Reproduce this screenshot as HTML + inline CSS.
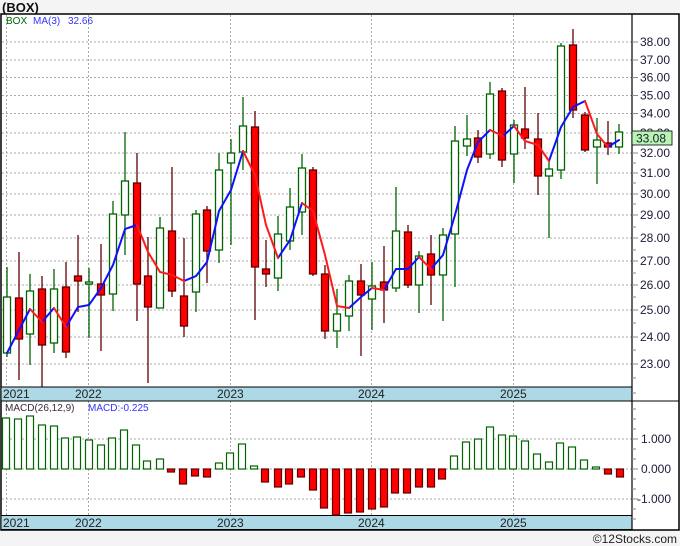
<!DOCTYPE html>
<html><head><meta charset="utf-8"><style>
html,body{margin:0;padding:0;background:#f4f4f4;width:680px;height:546px;overflow:hidden}
svg{display:block}
text{font-family:"Liberation Sans","DejaVu Sans",sans-serif}
</style></head><body>
<svg width="680" height="546" viewBox="0 0 680 546" xmlns="http://www.w3.org/2000/svg">
<rect x="0" y="0" width="680" height="546" fill="#f4f4f4"/>
<text x="2" y="12" font-size="13" font-weight="bold" fill="#111">(BOX)</text>
<rect x="1" y="14" width="678" height="516" fill="#fff" stroke="#000" stroke-width="1.5"/>
<g stroke="#aaa" stroke-width="1" stroke-dasharray="2,2">
<line x1="2" y1="42" x2="632" y2="42"/><line x1="2" y1="60" x2="632" y2="60"/><line x1="2" y1="77.5" x2="632" y2="77.5"/><line x1="2" y1="95.5" x2="632" y2="95.5"/><line x1="2" y1="113.5" x2="632" y2="113.5"/><line x1="2" y1="133" x2="632" y2="133"/><line x1="2" y1="153" x2="632" y2="153"/><line x1="2" y1="173" x2="632" y2="173"/><line x1="2" y1="194" x2="632" y2="194"/><line x1="2" y1="215" x2="632" y2="215"/><line x1="2" y1="238" x2="632" y2="238"/><line x1="2" y1="261" x2="632" y2="261"/><line x1="2" y1="285" x2="632" y2="285"/><line x1="2" y1="310" x2="632" y2="310"/><line x1="2" y1="337" x2="632" y2="337"/><line x1="2" y1="364" x2="632" y2="364"/>
<line x1="6.5" y1="15" x2="6.5" y2="387"/><line x1="88.5" y1="15" x2="88.5" y2="387"/><line x1="230.5" y1="15" x2="230.5" y2="387"/><line x1="371.5" y1="15" x2="371.5" y2="387"/><line x1="513.5" y1="15" x2="513.5" y2="387"/>
<line x1="6.5" y1="401" x2="6.5" y2="515"/><line x1="88.5" y1="401" x2="88.5" y2="515"/><line x1="230.5" y1="401" x2="230.5" y2="515"/><line x1="371.5" y1="401" x2="371.5" y2="515"/><line x1="513.5" y1="401" x2="513.5" y2="515"/>
<line x1="2" y1="439" x2="632" y2="439"/><line x1="2" y1="469" x2="632" y2="469"/><line x1="2" y1="499" x2="632" y2="499"/>
</g>
<text x="6" y="24" font-size="10" fill="#006400">BOX</text>
<text x="33" y="24" font-size="10" fill="#3333ff">MA(3)</text>
<text x="68" y="24" font-size="10" fill="#3333ff">32.66</text>
<g stroke-width="1.3">
<g stroke="#006400" fill="#fff">
<line x1="7" y1="267" x2="7" y2="357"/><rect x="3.5" y="297" width="7" height="56"/>
<line x1="30" y1="274" x2="30" y2="365"/><rect x="26.5" y="291" width="7" height="43"/>
<line x1="54" y1="269" x2="54" y2="353"/><rect x="50.5" y="289" width="7" height="54"/>
<line x1="89" y1="268" x2="89" y2="338"/><rect x="85.5" y="282" width="7" height="2"/>
<line x1="113" y1="201" x2="113" y2="311"/><rect x="109.5" y="214" width="7" height="80"/>
<line x1="125" y1="132" x2="125" y2="255"/><rect x="121.5" y="181" width="7" height="34"/>
<line x1="160" y1="217" x2="160" y2="308"/><rect x="156.5" y="228" width="7" height="80"/>
<line x1="196" y1="210" x2="196" y2="312"/><rect x="192.5" y="214" width="7" height="78"/>
<line x1="219" y1="153" x2="219" y2="263"/><rect x="215.5" y="170" width="7" height="80"/>
<line x1="231" y1="139" x2="231" y2="245"/><rect x="227.5" y="153" width="7" height="10"/>
<line x1="243" y1="97" x2="243" y2="170"/><rect x="239.5" y="126" width="7" height="26"/>
<line x1="278" y1="216" x2="278" y2="291"/><rect x="274.5" y="234" width="7" height="44"/>
<line x1="290" y1="188" x2="290" y2="250"/><rect x="286.5" y="207" width="7" height="34"/>
<line x1="302" y1="154" x2="302" y2="235"/><rect x="298.5" y="168" width="7" height="44"/>
<line x1="337" y1="289" x2="337" y2="348"/><rect x="333.5" y="314" width="7" height="17"/>
<line x1="349" y1="275" x2="349" y2="331"/><rect x="345.5" y="281" width="7" height="35"/>
<line x1="372" y1="262" x2="372" y2="330"/><rect x="368.5" y="286" width="7" height="13"/>
<line x1="396" y1="187" x2="396" y2="292"/><rect x="392.5" y="231" width="7" height="57"/>
<line x1="419" y1="251" x2="419" y2="313"/><rect x="415.5" y="256" width="7" height="29"/>
<line x1="443" y1="228" x2="443" y2="321"/><rect x="439.5" y="235" width="7" height="40"/>
<line x1="455" y1="126" x2="455" y2="287"/><rect x="451.5" y="141" width="7" height="93"/>
<line x1="467" y1="115" x2="467" y2="156"/><rect x="463.5" y="139" width="7" height="7"/>
<line x1="490" y1="82" x2="490" y2="159"/><rect x="486.5" y="94" width="7" height="60"/>
<line x1="514" y1="120" x2="514" y2="183"/><rect x="510.5" y="125" width="7" height="29"/>
<line x1="549" y1="160" x2="549" y2="238"/><rect x="545.5" y="169" width="7" height="7"/>
<line x1="561" y1="43" x2="561" y2="179"/><rect x="557.5" y="46" width="7" height="124"/>
<line x1="597" y1="118" x2="597" y2="184"/><rect x="593.5" y="140" width="7" height="7"/>
<line x1="619" y1="124" x2="619" y2="154"/><rect x="615.5" y="132" width="7" height="15"/>
</g>
<g stroke="#600000" fill="#ff0000">
<line x1="19" y1="252" x2="19" y2="380"/><rect x="15.5" y="298" width="7" height="41"/>
<line x1="42" y1="276" x2="42" y2="387"/><rect x="38.5" y="289" width="7" height="56"/>
<line x1="66" y1="262" x2="66" y2="358"/><rect x="62.5" y="287" width="7" height="65"/>
<line x1="78" y1="235" x2="78" y2="312"/><rect x="74.5" y="276" width="7" height="5"/>
<line x1="101" y1="244" x2="101" y2="351"/><rect x="97.5" y="284" width="7" height="11"/>
<line x1="137" y1="153" x2="137" y2="321"/><rect x="133.5" y="183" width="7" height="101"/>
<line x1="148" y1="237" x2="148" y2="383"/><rect x="144.5" y="276" width="7" height="31"/>
<line x1="172" y1="167" x2="172" y2="297"/><rect x="168.5" y="231" width="7" height="60"/>
<line x1="184" y1="238" x2="184" y2="337"/><rect x="180.5" y="296" width="7" height="30"/>
<line x1="207" y1="206" x2="207" y2="283"/><rect x="203.5" y="210" width="7" height="41"/>
<line x1="255" y1="111" x2="255" y2="320"/><rect x="251.5" y="127" width="7" height="140"/>
<line x1="266" y1="240" x2="266" y2="287"/><rect x="262.5" y="269" width="7" height="5"/>
<line x1="313" y1="167" x2="313" y2="276"/><rect x="309.5" y="170" width="7" height="104"/>
<line x1="325" y1="265" x2="325" y2="339"/><rect x="321.5" y="274" width="7" height="57"/>
<line x1="361" y1="264" x2="361" y2="356"/><rect x="357.5" y="281" width="7" height="14"/>
<line x1="384" y1="246" x2="384" y2="323"/><rect x="380.5" y="282" width="7" height="8"/>
<line x1="408" y1="225" x2="408" y2="288"/><rect x="404.5" y="232" width="7" height="53"/>
<line x1="431" y1="235" x2="431" y2="305"/><rect x="427.5" y="254" width="7" height="21"/>
<line x1="478" y1="130" x2="478" y2="163"/><rect x="474.5" y="138" width="7" height="19"/>
<line x1="502" y1="88" x2="502" y2="167"/><rect x="498.5" y="91" width="7" height="69"/>
<line x1="525" y1="87" x2="525" y2="149"/><rect x="521.5" y="129" width="7" height="9"/>
<line x1="538" y1="113" x2="538" y2="195"/><rect x="534.5" y="139" width="7" height="37"/>
<line x1="573" y1="29" x2="573" y2="118"/><rect x="569.5" y="45" width="7" height="65"/>
<line x1="585" y1="112" x2="585" y2="152"/><rect x="581.5" y="115" width="7" height="35"/>
<line x1="608" y1="121" x2="608" y2="155"/><rect x="604.5" y="143" width="7" height="4"/>
</g>
</g>
<g stroke-width="2" fill="none" stroke-linecap="round">
<path stroke="#1010ff" d="M7 353L19 330L30 309M42 322L54 308M66 327L78 307L89 305L101 288L113 265L125 229L137 225M184 281L196 276L207 262L219 211L231 190L243 151M278 258L290 240L302 203M349 308L361 297L372 288M384 290L396 269L408 269L419 257M431 269L443 255L455 215L467 170L478 142L490 130M503 136L514 126M549 161L561 127L573 107L585 101M608 147L619 140"/>
<path stroke="#ff1a1a" d="M30 309L42 322M54 308L66 327M137 225L148 252L160 272L172 275L184 281M243 151L255 175L266 225L278 258M302 203L313 211L325 255L337 306L349 308M372 288L384 290M419 257L431 269M490 130L503 136M514 126L525 141L538 145L549 161M585 101L597 134L608 147"/>
</g>
<rect x="1" y="387" width="631" height="14" fill="#add8e6" stroke="#000" stroke-width="1"/>
<rect x="1" y="515.5" width="631" height="14" fill="#add8e6" stroke="#000" stroke-width="1"/>
<line x1="632" y1="401" x2="679" y2="401" stroke="#000"/>
<g font-size="12" fill="#222">
<text x="3" y="398">2021</text><text x="75" y="398">2022</text><text x="217" y="398">2023</text><text x="358" y="398">2024</text><text x="500" y="398">2025</text>
<text x="3" y="527">2021</text><text x="75" y="527">2022</text><text x="217" y="527">2023</text><text x="358" y="527">2024</text><text x="500" y="527">2025</text>
</g>
<line x1="632" y1="14" x2="632" y2="530" stroke="#000" stroke-width="1.2"/>
<g stroke="#888" stroke-width="1">
<line x1="632" y1="42" x2="638" y2="42"/><line x1="632" y1="60" x2="638" y2="60"/><line x1="632" y1="77.5" x2="638" y2="77.5"/><line x1="632" y1="95.5" x2="638" y2="95.5"/><line x1="632" y1="113.5" x2="638" y2="113.5"/><line x1="632" y1="133" x2="638" y2="133"/><line x1="632" y1="153" x2="638" y2="153"/><line x1="632" y1="163" x2="636" y2="163"/><line x1="632" y1="173" x2="638" y2="173"/><line x1="632" y1="183" x2="636" y2="183"/><line x1="632" y1="194" x2="638" y2="194"/><line x1="632" y1="204" x2="636" y2="204"/><line x1="632" y1="215" x2="638" y2="215"/><line x1="632" y1="227" x2="636" y2="227"/><line x1="632" y1="238" x2="638" y2="238"/><line x1="632" y1="250" x2="636" y2="250"/><line x1="632" y1="261" x2="638" y2="261"/><line x1="632" y1="273" x2="636" y2="273"/><line x1="632" y1="285" x2="638" y2="285"/><line x1="632" y1="297" x2="636" y2="297"/><line x1="632" y1="310" x2="638" y2="310"/><line x1="632" y1="323" x2="636" y2="323"/><line x1="632" y1="337" x2="638" y2="337"/><line x1="632" y1="350" x2="636" y2="350"/><line x1="632" y1="364" x2="638" y2="364"/><line x1="632" y1="378" x2="636" y2="378"/><line x1="632" y1="393" x2="636" y2="393"/>
<line x1="632" y1="409" x2="636" y2="409"/><line x1="632" y1="419" x2="636" y2="419"/><line x1="632" y1="429" x2="636" y2="429"/><line x1="632" y1="439" x2="638" y2="439"/><line x1="632" y1="449" x2="636" y2="449"/><line x1="632" y1="459" x2="636" y2="459"/><line x1="632" y1="469" x2="638" y2="469"/><line x1="632" y1="479" x2="636" y2="479"/><line x1="632" y1="489" x2="636" y2="489"/><line x1="632" y1="499" x2="638" y2="499"/><line x1="632" y1="509" x2="636" y2="509"/><line x1="632" y1="519" x2="636" y2="519"/>
</g>
<g font-size="12" fill="#1a1a3a">
<text x="640" y="46">38.00</text><text x="640" y="64">37.00</text><text x="640" y="81.5">36.00</text><text x="640" y="99.5">35.00</text><text x="640" y="117.5">34.00</text><text x="640" y="137">33.00</text><text x="640" y="157">32.00</text><text x="640" y="177">31.00</text><text x="640" y="198">30.00</text><text x="640" y="219">29.00</text><text x="640" y="242">28.00</text><text x="640" y="265">27.00</text><text x="640" y="289">26.00</text><text x="640" y="314">25.00</text><text x="640" y="341">24.00</text><text x="640" y="368">23.00</text>
<text x="641" y="443">1.000</text><text x="641" y="473">0.000</text><text x="637" y="503">-1.000</text>
</g>
<rect x="632" y="131" width="40" height="14" fill="#b8f5b0" stroke="#000" stroke-width="0.8"/>
<text x="636" y="142.5" font-size="12" fill="#1a1a3a">33.08</text>
<text x="5" y="411" font-size="10" fill="#3a2a3a">MACD(26,12,9)</text>
<text x="88" y="411" font-size="10" fill="#3333ff">MACD:-0.225</text>
<g stroke-width="1.2">
<g stroke="#006400" fill="#fff">
<rect x="2.5" y="418" width="7" height="51"/><rect x="14.5" y="419" width="7" height="50"/><rect x="26.5" y="416" width="7" height="53"/><rect x="38.5" y="425" width="7" height="44"/><rect x="50.5" y="426" width="7" height="43"/><rect x="61.5" y="438" width="7" height="31"/><rect x="73.5" y="437" width="7" height="32"/><rect x="85.5" y="440" width="7" height="29"/><rect x="97.5" y="445" width="7" height="24"/><rect x="108.5" y="438" width="7" height="31"/><rect x="120.5" y="430" width="7" height="39"/><rect x="132.5" y="445" width="7" height="24"/><rect x="143.5" y="461" width="7" height="8"/><rect x="156.5" y="459" width="7" height="10"/>
<rect x="215.5" y="463" width="7" height="6"/><rect x="226.5" y="453" width="7" height="16"/><rect x="238.5" y="444" width="7" height="25"/><rect x="250.5" y="466" width="7" height="3"/>
<rect x="450.5" y="456" width="7" height="13"/><rect x="462.5" y="442" width="7" height="27"/><rect x="474.5" y="439" width="7" height="30"/><rect x="486.5" y="427" width="7" height="42"/><rect x="498.5" y="435" width="7" height="34"/><rect x="509.5" y="436" width="7" height="33"/><rect x="521.5" y="441" width="7" height="28"/><rect x="533.5" y="454" width="7" height="15"/><rect x="545.5" y="462" width="7" height="7"/><rect x="556.5" y="443" width="7" height="26"/><rect x="568.5" y="447" width="7" height="22"/><rect x="580.5" y="460" width="7" height="9"/><rect x="592.5" y="467" width="7" height="2"/>
</g>
<g stroke="#600000" fill="#ff0000">
<rect x="167.5" y="469" width="7" height="3"/><rect x="179.5" y="469" width="7" height="15"/><rect x="191.5" y="469" width="7" height="7"/><rect x="203.5" y="469" width="7" height="8"/>
<rect x="261.5" y="469" width="7" height="13"/><rect x="274.5" y="469" width="7" height="18"/><rect x="285.5" y="469" width="7" height="15"/><rect x="297.5" y="469" width="7" height="8"/><rect x="309.5" y="469" width="7" height="21"/><rect x="320.5" y="469" width="7" height="39"/><rect x="332.5" y="469" width="7" height="46"/><rect x="344.5" y="469" width="7" height="44"/><rect x="356.5" y="469" width="7" height="43"/><rect x="368.5" y="469" width="7" height="40"/><rect x="380.5" y="469" width="7" height="38"/><rect x="391.5" y="469" width="7" height="24"/><rect x="403.5" y="469" width="7" height="24"/><rect x="415.5" y="469" width="7" height="18"/><rect x="427.5" y="469" width="7" height="18"/><rect x="438.5" y="469" width="7" height="10"/>
<rect x="604.5" y="469" width="7" height="5"/><rect x="616.5" y="469" width="7" height="8"/>
</g>
</g>
<text x="677" y="543" font-size="12" fill="#222" text-anchor="end">©12Stocks.com</text>
</svg>
</body></html>
